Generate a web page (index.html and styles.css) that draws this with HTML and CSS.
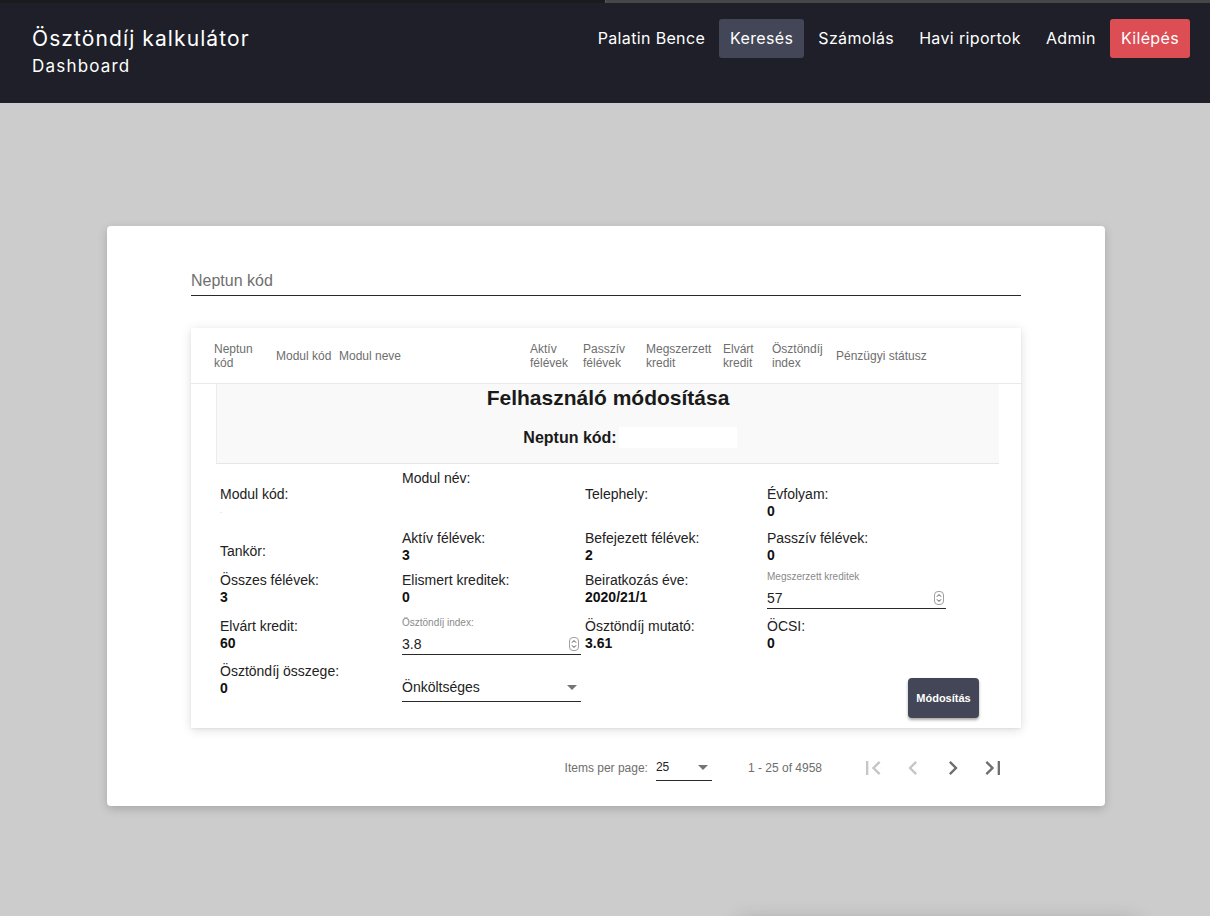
FILE: index.html
```html
<!DOCTYPE html>
<html lang="hu">
<head>
<meta charset="utf-8">
<title>Ösztöndíj kalkulátor</title>
<link rel="stylesheet" href="styles.css">
</head>
<body>
<div class="topstrip"><span class="ts-a"></span><span class="ts-b"></span></div>
<header class="topbar">
  <div class="brand">
    <div class="brand-title">Ösztöndíj kalkulátor</div>
    <div class="brand-sub">Dashboard</div>
  </div>
  <nav class="nav">
    <a class="nav-item">Palatin Bence</a>
    <a class="nav-item active">Keresés</a>
    <a class="nav-item">Számolás</a>
    <a class="nav-item">Havi riportok</a>
    <a class="nav-item">Admin</a>
    <a class="nav-item danger">Kilépés</a>
  </nav>
</header>
<main class="main">
  <section class="card">
    <div class="search-field"><span class="placeholder">Neptun kód</span></div>
    <div class="table">
      <div class="thead">
        <div class="th">Neptun<br>kód</div>
        <div class="th">Modul kód</div>
        <div class="th">Modul neve</div>
        <div class="th">Aktív<br>félévek</div>
        <div class="th">Passzív<br>félévek</div>
        <div class="th">Megszerzett<br>kredit</div>
        <div class="th">Elvárt<br>kredit</div>
        <div class="th">Ösztöndíj<br>index</div>
        <div class="th">Pénzügyi státusz</div>
      </div>
      <div class="detail">
        <div class="edit-head">
          <h2 class="edit-title">Felhasználó módosítása</h2>
          <div class="neptun-row"><b>Neptun kód:</b><span class="neptun-input"></span></div>
        </div>
        <div class="fields">
          <div class="cell pt16"><div class="lbl">Modul kód:</div><div class="val dot">.</div></div>
          <div class="cell"><div class="lbl">Modul név:</div></div>
          <div class="cell pt16"><div class="lbl">Telephely:</div></div>
          <div class="cell pt16"><div class="lbl">Évfolyam:</div><div class="val">0</div></div>

          <div class="cell pt13"><div class="lbl">Tankör:</div></div>
          <div class="cell"><div class="lbl">Aktív félévek:</div><div class="val">3</div></div>
          <div class="cell"><div class="lbl">Befejezett félévek:</div><div class="val">2</div></div>
          <div class="cell"><div class="lbl">Passzív félévek:</div><div class="val">0</div></div>

          <div class="cell"><div class="lbl">Összes félévek:</div><div class="val">3</div></div>
          <div class="cell"><div class="lbl">Elismert kreditek:</div><div class="val">0</div></div>
          <div class="cell"><div class="lbl">Beiratkozás éve:</div><div class="val">2020/21/1</div></div>
          <div class="cell">
            <div class="ff">
              <div class="ff-label">Megszerzett kreditek</div>
              <div class="ff-value"><span>57</span>
                <svg class="spin" width="10" height="14" viewBox="0 0 10 14"><rect x="0.5" y="0.5" width="9" height="13" rx="3.5" fill="none" stroke="#a0a0a0"/><path d="M3 5.6 5 3.6 7 5.6M3 8.4 5 10.4 7 8.4" fill="none" stroke="#444" stroke-width="1"/></svg>
              </div>
            </div>
          </div>

          <div class="cell"><div class="lbl">Elvárt kredit:</div><div class="val">60</div></div>
          <div class="cell">
            <div class="ff">
              <div class="ff-label">Ösztöndíj index:</div>
              <div class="ff-value"><span>3.8</span>
                <svg class="spin" width="10" height="14" viewBox="0 0 10 14"><rect x="0.5" y="0.5" width="9" height="13" rx="3.5" fill="none" stroke="#a0a0a0"/><path d="M3 5.6 5 3.6 7 5.6M3 8.4 5 10.4 7 8.4" fill="none" stroke="#444" stroke-width="1"/></svg>
              </div>
            </div>
          </div>
          <div class="cell"><div class="lbl">Ösztöndíj mutató:</div><div class="val">3.61</div></div>
          <div class="cell"><div class="lbl">ÖCSI:</div><div class="val">0</div></div>

          <div class="cell"><div class="lbl">Ösztöndíj összege:</div><div class="val">0</div></div>
          <div class="cell">
            <div class="ff ff-select">
              <div class="ff-value"><span>Önköltséges</span><span class="caret"></span></div>
            </div>
          </div>
          <div class="cell"></div>
          <div class="cell cell-btn"><button class="btn-save">Módosítás</button></div>
        </div>
      </div>
    </div>
    <div class="paginator">
      <span class="pg-label">Items per page:</span>
      <div class="pg-select"><span>25</span><span class="caret"></span></div>
      <span class="pg-range">1 - 25 of 4958</span>
      <div class="pg-btns">
        <span class="pg-btn off"><svg width="28" height="28" viewBox="0 0 24 24"><path d="M18.41 16.59 13.82 12l4.59-4.59L17 6l-6 6 6 6zM6 6h2v12H6z"/></svg></span>
        <span class="pg-btn off"><svg width="28" height="28" viewBox="0 0 24 24"><path d="M15.41 7.41 14 6l-6 6 6 6 1.41-1.41L10.83 12z"/></svg></span>
        <span class="pg-btn"><svg width="28" height="28" viewBox="0 0 24 24"><path d="M10 6 8.59 7.41 13.17 12l-4.58 4.59L10 18l6-6z"/></svg></span>
        <span class="pg-btn"><svg width="28" height="28" viewBox="0 0 24 24"><path d="M5.59 7.41 10.18 12l-4.59 4.59L7 18l6-6-6-6zM16 6h2v12h-2z"/></svg></span>
      </div>
    </div>
  </section>
</main>
<div class="toast-shadow"></div>
</body>
</html>
```
FILE: styles.css
```css
* { box-sizing: border-box; }
html, body { margin: 0; padding: 0; }
body {
  background: #cccccc;
  font-family: "Liberation Sans", Arial, sans-serif;
  color: #212121;
  min-height: 916px;
  overflow: hidden;
}

.topstrip { display: flex; height: 3px; }
.ts-a { flex: 0 0 605px; background: #1b1b1d; }
.ts-b { flex: 1; background: #464646; border-left: 1px solid #5a5a5a; }

.topbar {
  height: 100px;
  background: #1e1f28;
  display: flex;
  justify-content: space-between;
  align-items: flex-start;
  padding: 0 20px 0 32px;
  font-family: Inter, "Noto Sans", sans-serif;
  color: #fff;
}
.brand { padding-top: 22px; }
.brand-title { font-size: 21px; line-height: 28px; letter-spacing: 1.1px; }
.brand-sub { font-size: 17px; line-height: 26px; letter-spacing: 1.2px; }

.nav { display: flex; gap: 3px; margin-top: 16px; }
.nav-item {
  display: block;
  height: 39px;
  line-height: 39px;
  padding: 0 11px;
  font-size: 16px;
  letter-spacing: 0.35px;
  color: #fff;
  border-radius: 3px;
}
.nav-item.active { background: #434656; }
.nav-item.danger { background: #dc4d54; }

.main { padding-top: 123px; }
.card {
  width: 998px;
  margin: 0 0 0 107px;
  background: #fff;
  border-radius: 4px;
  padding: 44px 84px 10px;
  box-shadow: 0 3px 10px rgba(0,0,0,0.18);
}

.search-field {
  line-height: 20px;
  font-size: 16px;
  padding-top: 1px;
  padding-bottom: 4px;
  border-bottom: 1px solid #2a2a2a;
}
.placeholder { color: #6f6f6f; }

.table {
  margin-top: 32px;
  background: #fff;
  box-shadow: 0 2px 10px rgba(0,0,0,0.13), 0 1px 2px rgba(0,0,0,0.06);
}
.thead {
  display: grid;
  grid-template-columns: 62px 63px 191px 53px 63px 77px 49px 64px 1fr;
  align-items: center;
  height: 56px;
  padding-left: 23px;
  border-bottom: 1px solid #e9e9e9;
}
.th { font-size: 12px; line-height: 14px; color: #6e6e6e; }

.detail { padding-bottom: 7px; }
.edit-head {
  margin: 0 22px 0 25px;
  height: 80px;
  background: #f9f9f9;
  border-left: 1px solid #ececec;
  border-bottom: 1px solid #e6e6e6;
  text-align: center;
  padding-top: 2px;
}
.edit-title {
  margin: 0;
  font-size: 21px;
  line-height: 24px;
  font-weight: bold;
  color: #1a1a1a;
}
.neptun-row {
  margin-top: 17px;
  display: flex;
  justify-content: center;
  align-items: center;
  padding-left: 44px;
  font-size: 16px;
  height: 21px;
}
.neptun-row b { color: #1a1a1a; }
.neptun-input { width: 118px; height: 21px; background: #fff; margin-left: 2px; }

.fields {
  margin: 6px 0 0 29px;
  width: 759px;
  display: grid;
  grid-template-columns: 182px 183px 182px 212px;
  grid-template-rows: 60px 42px 46px 45px 58px;
  font-size: 14px;
  line-height: 17px;
}
.cell { min-width: 0; }
.pt16 { padding-top: 16px; }
.pt13 { padding-top: 13px; }
.lbl { color: #222; }
.val { font-weight: bold; color: #111; }
.val.dot { font-size: 6px; font-weight: normal; color: #999; }

.ff { width: 179px; margin-top: -2px; }
.ff-label { height: 14px; font-size: 10px; line-height: 14px; color: #8a8a8a; }
.ff-value {
  display: flex;
  align-items: center;
  justify-content: space-between;
  padding-top: 3px;
  height: 25px;
  line-height: 20px;
  border-bottom: 1px solid #2a2a2a;
  color: #222;
}
.spin { margin-right: 2px; }
.ff-select { margin-top: 14px; }
.ff-select .ff-value { padding-top: 0; height: 25px; padding-bottom: 4px; }
.caret {
  width: 0; height: 0;
  border-left: 5px solid transparent;
  border-right: 5px solid transparent;
  border-top: 5px solid #757575;
  margin-right: 4px;
}

.cell-btn { display: flex; justify-content: flex-end; align-items: flex-start; }
.btn-save {
  margin-top: 15px;
  width: 71px;
  height: 40px;
  border: 0;
  border-radius: 4px;
  background: #434656;
  color: #fff;
  font-family: "Liberation Sans", Arial, sans-serif;
  font-size: 11px;
  font-weight: bold;
  padding: 0;
  box-shadow: 0 2px 3px rgba(0,0,0,0.35);
}

.paginator {
  margin-top: 12px;
  height: 56px;
  display: flex;
  align-items: center;
  justify-content: flex-end;
  padding-right: 8px;
  font-size: 12px;
  color: #6e6e6e;
}
.pg-select {
  width: 56px;
  margin-left: 8px;
  display: flex;
  justify-content: space-between;
  align-items: center;
  padding-top: 4px;
  padding-bottom: 5px;
  line-height: 16px;
  border-bottom: 1px solid #2a2a2a;
  color: #222;
}
.pg-select .caret { margin-right: 4px; }
.pg-range { margin-left: 36px; margin-right: 2px; }
.pg-btns { display: flex; margin-left: 29px; }
.pg-btn {
  width: 40px; height: 40px;
  display: flex; align-items: center; justify-content: center;
  fill: #6f6f6f;
}
.pg-btn.off { fill: #c6c6c6; }

.toast-shadow {
  position: fixed;
  left: 745px;
  top: 930px;
  width: 385px;
  height: 48px;
  background: #cccccc;
  box-shadow: 0 -2px 22px 6px rgba(0,0,0,0.22);
}
```
